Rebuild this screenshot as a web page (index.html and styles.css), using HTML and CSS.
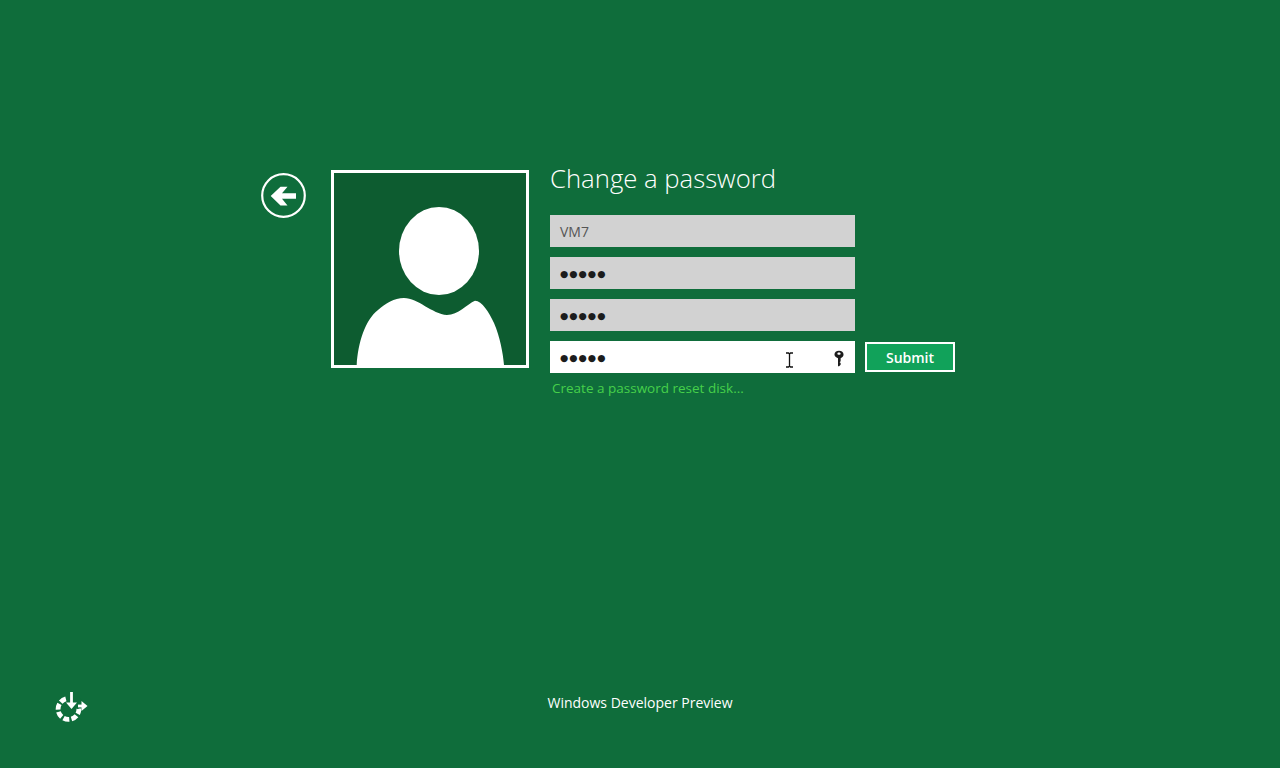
FILE: index.html
```html
<!DOCTYPE html>
<html lang="en">
<head>
<meta charset="utf-8">
<title>Change a password</title>
<link rel="stylesheet" href="styles.css">
</head>
<body>
<div class="screen">
  <main class="panel">
    <svg class="back" viewBox="0 0 45 45" aria-label="Back">
      <circle cx="22.5" cy="22.5" r="21.3" fill="none" stroke="#fff" stroke-width="2.2"/>
      <path d="M35 20.3H21L26.5 13.7H19.5L9.7 23L19.5 32.6H26.5L21 25.8H35Z" fill="#fff"/>
    </svg>
    <div class="avatar">
      <svg viewBox="0 0 192 192" aria-hidden="true">
        <ellipse cx="105" cy="78" rx="40" ry="44" fill="#fff"/>
        <path d="M22.7 192C24 170 31 147 44 137C52 130 60 125 70 125C84 125 98 141 113 142C124 142 133 131 141 127.7C148 128 155 139 160 150C166 164 169 180 170 192Z" fill="#fff"/>
      </svg>
    </div>
    <form class="form">
      <h1 class="title">Change a password</h1>
      <div class="field"><span class="value">VM7</span></div>
      <div class="field"><span class="dots">●●●●●</span></div>
      <div class="field"><span class="dots">●●●●●</span></div>
      <div class="submit-row">
        <div class="field active">
          <span class="dots">●●●●●</span>
          <svg class="ibeam" viewBox="0 0 9 16" aria-hidden="true">
            <path d="M1 1H3.5L4.5 2L5.5 1H8M4.5 2V14M1 15H3.5L4.5 14L5.5 15H8" fill="none" stroke="#111" stroke-width="1.3"/>
          </svg>
          <svg class="key" viewBox="0 0 11 18" aria-hidden="true">
            <path fill-rule="evenodd" d="M5.5 0.5C8.5 0.5 10.5 2.2 10.5 4.6C10.5 6.5 9.2 7.9 7.3 8.6V12L6.2 13L7.3 14V16L5.6 17.6H4.4V8.6C2.3 8 0.5 6.5 0.5 4.6C0.5 2.2 2.5 0.5 5.5 0.5ZM5.5 2.5C4.4 2.5 3.7 3 3.7 3.7C3.7 4.4 4.4 4.9 5.5 4.9C6.6 4.9 7.3 4.4 7.3 3.7C7.3 3 6.6 2.5 5.5 2.5Z" fill="#1c1c1c"/>
          </svg>
        </div>
        <button class="submit" type="button">Submit</button>
      </div>
      <a class="reset" href="#">Create a password reset disk...</a>
    </form>
  </main>
  <footer class="footer">
    <svg class="access" viewBox="0 0 33 30" aria-label="Ease of access">
      <circle cx="13.5" cy="17" r="10.4" fill="none" stroke="#fff" stroke-width="4.8" stroke-dasharray="6 2.2" stroke-dashoffset="1"/>
      <path d="M16.5 0V12M20 8L26 14" fill="none" stroke="#0f6d3b" stroke-width="9"/>
      <path d="M16.5 0V15" fill="none" stroke="#fff" stroke-width="2.8"/>
      <path d="M11 10.5H22L16.5 17Z" fill="#fff"/>
      <path d="M23 14H29" fill="none" stroke="#fff" stroke-width="2.8"/>
      <path d="M26.5 9L32.5 14L26.5 19Z" fill="#fff"/>
    </svg>
    <div class="brand">Windows Developer Preview</div>
  </footer>
</div>
</body>
</html>
```
FILE: styles.css
```css
html, body {
  margin: 0;
  padding: 0;
}
body {
  background: #0f6d3b;
  color: #fff;
  font-family: "Open Sans", "Noto Sans", sans-serif;
}
.screen {
  position: relative;
  box-sizing: border-box;
  width: 1280px;
  height: 768px;
  overflow: hidden;
  display: flex;
  flex-direction: column;
  justify-content: space-between;
  padding: 170px 0 46px 0;
}
.panel {
  display: flex;
  align-items: flex-start;
  padding-left: 261px;
}
.back {
  width: 45px;
  height: 45px;
  margin-top: 3px;
  margin-right: 25px;
  flex: none;
}
.avatar {
  box-sizing: border-box;
  width: 198px;
  height: 198px;
  border: 3px solid #fff;
  background: #0d5c30;
  margin-right: 21px;
  flex: none;
}
.avatar svg {
  display: block;
  width: 192px;
  height: 192px;
}
.form {
  display: flex;
  flex-direction: column;
  width: 410px;
  margin-top: -11px;
}
.title {
  margin: 0 0 16px 0;
  font-size: 25.7px;
  line-height: 40px;
  font-weight: 300;
  height: 40px;
}
.field {
  position: relative;
  box-sizing: border-box;
  width: 305px;
  height: 32px;
  margin-bottom: 10px;
  padding-left: 10px;
  background: #d2d2d2;
  display: flex;
  align-items: center;
  flex: none;
}
.value {
  font-size: 14px;
  color: #555;
}
.dots {
  font-family: "DejaVu Sans", sans-serif;
  font-size: 9.5px;
  letter-spacing: 1px;
  color: #1c1c1c;
}
.submit-row {
  display: flex;
  align-items: flex-start;
  gap: 10px;
}
.active {
  background: #fff;
  margin-bottom: 0;
}
.ibeam {
  position: absolute;
  left: 235px;
  top: 11px;
  width: 9px;
  height: 16px;
}
.key {
  position: absolute;
  left: 284px;
  top: 9px;
  width: 10px;
  height: 17px;
}
.submit {
  box-sizing: border-box;
  width: 90px;
  height: 30px;
  margin-top: 1px;
  padding: 0;
  border: 2px solid #fff;
  background: #11a25a;
  color: #fff;
  font-family: "Open Sans", "Noto Sans", sans-serif;
  font-size: 14px;
  font-weight: 600;
}
.reset {
  margin: 5px 0 0 2px;
  font-size: 13.5px;
  line-height: 20px;
  color: #46d04a;
  text-decoration: none;
}
.footer {
  display: flex;
  align-items: flex-start;
  position: relative;
  justify-content: center;
  height: 30px;
}
.access {
  position: absolute;
  left: 55px;
  top: 0;
  width: 33px;
  height: 30px;
}
.brand {
  font-size: 14px;
  line-height: 20px;
  margin-top: 1px;
}
```
